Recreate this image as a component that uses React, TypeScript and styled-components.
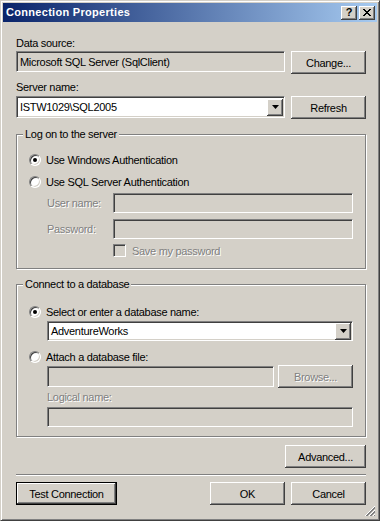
import React from "react";
import styled, { createGlobalStyle, css } from "styled-components";

const Global = createGlobalStyle`
  html, body { margin: 0; padding: 0; background: #ffffff; }
  body { font-family: "Liberation Sans", Arial, sans-serif; font-size: 11px; }
  #root { width: 383px; height: 522px; overflow: hidden; }
`;

const Window = styled.div`
  position: relative;
  box-sizing: border-box;
  width: 380px;
  height: 521px;
  background: #d4d0c8;
  border: 1px solid;
  border-color: #d4d0c8 #404040 #404040 #d4d0c8;
  box-shadow: inset 1px 1px #ffffff, inset -1px -1px #808080;
  padding: 2px;
  display: flex;
  flex-direction: column;
  font-family: "Liberation Sans", Arial, sans-serif;
  font-size: 11px;
  letter-spacing: -0.3px;
  color: #000;
`;

const TitleBar = styled.div`
  height: 19px;
  flex: none;
  display: flex;
  align-items: center;
  padding: 0 2px 0 3px;
  background: linear-gradient(to right, #0a246a, #a6caf0);
  color: #fff;
  font-weight: bold;
  letter-spacing: 0.3px;
`;

const TitleText = styled.span`
  flex: 1;
  line-height: 13px;
`;

const CaptionButton = styled.div`
  box-sizing: border-box;
  width: 16px;
  height: 14px;
  margin-left: 2px;
  background: #d4d0c8;
  box-shadow: inset -1px -1px #404040, inset 1px 1px #ffffff, inset -2px -2px #808080;
  display: flex;
  align-items: center;
  justify-content: center;
  color: #000;
  font-weight: bold;
  font-size: 11px;
  line-height: 11px;
  letter-spacing: 0;
`;

const Body = styled.div`
  flex: 1;
  display: flex;
  flex-direction: column;
  padding: 15px 11px 0 13px;
`;

const Label = styled.div<{ $mt?: number; $disabled?: boolean }>`
  line-height: 13px;
  margin-top: ${(p) => p.$mt ?? 0}px;
  white-space: nowrap;
  ${(p) =>
    p.$disabled &&
    css`
      color: #808080;
      text-shadow: 1px 1px 0 #ffffff;
    `}
`;

const Row = styled.div<{ $mt?: number; $justify?: string; $align?: string }>`
  display: flex;
  justify-content: ${(p) => p.$justify ?? "space-between"};
  align-items: ${(p) => p.$align ?? "flex-start"};
  margin-top: ${(p) => p.$mt ?? 0}px;
`;

const Field = styled.div<{ $w?: number; $h?: number; $white?: boolean; $mt?: number }>`
  box-sizing: border-box;
  width: ${(p) => (p.$w ? `${p.$w}px` : "auto")};
  flex: ${(p) => (p.$w ? "none" : "1 1 auto")};
  height: ${(p) => p.$h ?? 21}px;
  margin-top: ${(p) => p.$mt ?? 0}px;
  background: ${(p) => (p.$white ? "#ffffff" : "#d4d0c8")};
  border: 1px solid;
  border-color: #808080 #ffffff #ffffff #808080;
  box-shadow: inset 1px 1px #404040, inset -1px -1px #d4d0c8;
  padding: 0 2px 0 3px;
  display: flex;
  align-items: center;
  white-space: nowrap;
  overflow: hidden;
`;

const ComboText = styled.span`
  flex: 1;
`;

const DropButton = styled.div`
  box-sizing: border-box;
  width: 16px;
  height: 17px;
  margin-right: -1px;
  flex: none;
  background: #d4d0c8;
  box-shadow: inset -1px -1px #404040, inset 1px 1px #ffffff, inset -2px -2px #808080,
    inset 2px 2px #d4d0c8;
  display: flex;
  align-items: center;
  justify-content: center;
`;

const Button = styled.div<{ $w?: number; $default?: boolean; $disabled?: boolean }>`
  box-sizing: border-box;
  width: ${(p) => p.$w ?? 75}px;
  height: 23px;
  flex: none;
  background: #d4d0c8;
  display: flex;
  align-items: center;
  justify-content: center;
  white-space: nowrap;
  box-shadow: inset -1px -1px #404040, inset 1px 1px #ffffff, inset -2px -2px #808080,
    inset 2px 2px #d4d0c8;
  ${(p) =>
    p.$default &&
    css`
      border: 1px solid #000;
    `}
  ${(p) =>
    p.$disabled &&
    css`
      color: #808080;
      text-shadow: 1px 1px 0 #ffffff;
    `}
`;

const Group = styled.fieldset<{ $mt?: number }>`
  margin: ${(p) => p.$mt ?? 0}px 0 0 0;
  padding: 0;
  border: 1px solid #808080;
  box-shadow: inset 1px 1px #ffffff, 1px 1px #ffffff;
  min-width: 0;
`;

const Legend = styled.legend`
  margin-left: 6px;
  padding: 0 2px;
  line-height: 13px;
  background: #d4d0c8;
`;

const GroupBody = styled.div<{ $pb: number }>`
  display: flex;
  flex-direction: column;
  padding: 0 12px ${(p) => p.$pb}px 12px;
`;

const OptionRow = styled.div<{ $mt?: number }>`
  display: flex;
  align-items: center;
  height: 13px;
  margin-top: ${(p) => p.$mt ?? 0}px;
  white-space: nowrap;
`;

const RadioCircle = styled.span<{ $checked?: boolean }>`
  position: relative;
  box-sizing: border-box;
  width: 12px;
  height: 12px;
  flex: none;
  border-radius: 50%;
  border: 1px solid;
  border-color: #808080 #ffffff #ffffff #808080;
  box-shadow: inset 1px 1px #404040, inset -1px -1px #d4d0c8;
  background: #ffffff;
  margin-right: 5px;
  ${(p) =>
    p.$checked &&
    css`
      &::after {
        content: "";
        position: absolute;
        left: 3px;
        top: 3px;
        width: 4px;
        height: 4px;
        border-radius: 50%;
        background: #000;
      }
    `}
`;

const Indent = styled.div<{ $mt?: number }>`
  display: flex;
  flex-direction: column;
  padding-left: 18px;
  margin-top: ${(p) => p.$mt ?? 0}px;
`;

const FormRow = styled.div<{ $mt?: number }>`
  display: flex;
  align-items: center;
  margin-top: ${(p) => p.$mt ?? 0}px;
`;

const FormLabel = styled.div`
  width: 66px;
  flex: none;
  color: #808080;
  text-shadow: 1px 1px 0 #ffffff;
  line-height: 13px;
`;

const CheckRow = styled.div<{ $mt?: number }>`
  display: flex;
  align-items: center;
  height: 13px;
  margin-top: ${(p) => p.$mt ?? 0}px;
  padding-left: 66px;
  color: #808080;
  text-shadow: 1px 1px 0 #ffffff;
  white-space: nowrap;
`;

const CheckBox = styled.span`
  box-sizing: border-box;
  width: 13px;
  height: 13px;
  flex: none;
  margin-right: 6px;
  border: 1px solid;
  border-color: #808080 #ffffff #ffffff #808080;
  box-shadow: inset 1px 1px #404040, inset -1px -1px #d4d0c8;
  background: #d4d0c8;
`;

const Separator = styled.div<{ $mt?: number }>`
  height: 0;
  margin-top: ${(p) => p.$mt ?? 0}px;
  border-top: 1px solid #808080;
  border-bottom: 1px solid #ffffff;
`;

const ButtonGroup = styled.div`
  display: flex;
  gap: 6px;
`;

const Grip = styled.svg`
  position: absolute;
  right: 3px;
  bottom: 3px;
`;

const Arrow = () => (
  <svg width="7" height="4" viewBox="0 0 7 4">
    <path d="M0 0h7L3.5 4z" fill="#000" />
  </svg>
);

const CloseGlyph = () => (
  <svg width="8" height="7" viewBox="0 0 8 7" shapeRendering="crispEdges">
    <path
      d="M0 0h2v1h1v1h2V1h1V0h2v1H7v1H6v1H5v1h1v1h1v1h1v1H6V6H5V5H3v1H2v1H0V6h1V5h1V4h1V3H2V2H1V1H0z"
      fill="#000"
    />
  </svg>
);

const Radio = ({ checked, label, mt }: { checked?: boolean; label: string; mt?: number }) => (
  <OptionRow $mt={mt}>
    <RadioCircle $checked={checked} />
    {label}
  </OptionRow>
);

export default function App() {
  return (
    <>
      <Global />
      <Window>
        <TitleBar>
          <TitleText>Connection Properties</TitleText>
          <CaptionButton>?</CaptionButton>
          <CaptionButton>
            <CloseGlyph />
          </CaptionButton>
        </TitleBar>
        <Body>
          <Label>Data source:</Label>
          <Row $mt={1}>
            <Field $w={269}>Microsoft SQL Server (SqlClient)</Field>
            <Button>Change...</Button>
          </Row>
          <Label $mt={7}>Server name:</Label>
          <Row $mt={2}>
            <Field $w={269} $h={22} $white>
              <ComboText>ISTW1029\SQL2005</ComboText>
              <DropButton>
                <Arrow />
              </DropButton>
            </Field>
            <Button>Refresh</Button>
          </Row>

          <Group $mt={9}>
            <Legend>Log on to the server</Legend>
            <GroupBody $pb={11}>
              <Radio mt={12} checked label="Use Windows Authentication" />
              <Radio mt={9} label="Use SQL Server Authentication" />
              <Indent $mt={5}>
                <FormRow>
                  <FormLabel>User name:</FormLabel>
                  <Field $h={20} />
                </FormRow>
                <FormRow $mt={6}>
                  <FormLabel>Password:</FormLabel>
                  <Field $h={20} />
                </FormRow>
                <CheckRow $mt={5}>
                  <CheckBox />
                  Save my password
                </CheckRow>
              </Indent>
            </GroupBody>
          </Group>

          <Group $mt={9}>
            <Legend>Connect to a database</Legend>
            <GroupBody $pb={9}>
              <Radio mt={14} checked label="Select or enter a database name:" />
              <Indent $mt={3}>
                <Field $h={20} $white>
                  <ComboText>AdventureWorks</ComboText>
                  <DropButton>
                    <Arrow />
                  </DropButton>
                </Field>
              </Indent>
              <Radio mt={9} label="Attach a database file:" />
              <Indent $mt={2}>
                <Row $align="center">
                  <Field $w={227} />
                  <Button $disabled>Browse...</Button>
                </Row>
                <Label $mt={3} $disabled>
                  Logical name:
                </Label>
                <Field $mt={3} $h={20} />
              </Indent>
            </GroupBody>
          </Group>

          <Row $mt={8} $justify="flex-end">
            <Button $w={81}>Advanced...</Button>
          </Row>
          <Separator $mt={6} />
          <Row $mt={6}>
            <Button $w={101} $default>
              Test Connection
            </Button>
            <ButtonGroup>
              <Button>OK</Button>
              <Button>Cancel</Button>
            </ButtonGroup>
          </Row>
        </Body>
        <Grip width="12" height="12" viewBox="0 0 12 12" shapeRendering="crispEdges">
          <path d="M11 1L1 11M11 5L5 11M11 9L9 11" stroke="#ffffff" strokeWidth="1" />
          <path d="M11 2L2 11M11 3L3 11M11 6L6 11M11 7L7 11M11 10L10 11" stroke="#808080" strokeWidth="1" />
        </Grip>
      </Window>
    </>
  );
}
